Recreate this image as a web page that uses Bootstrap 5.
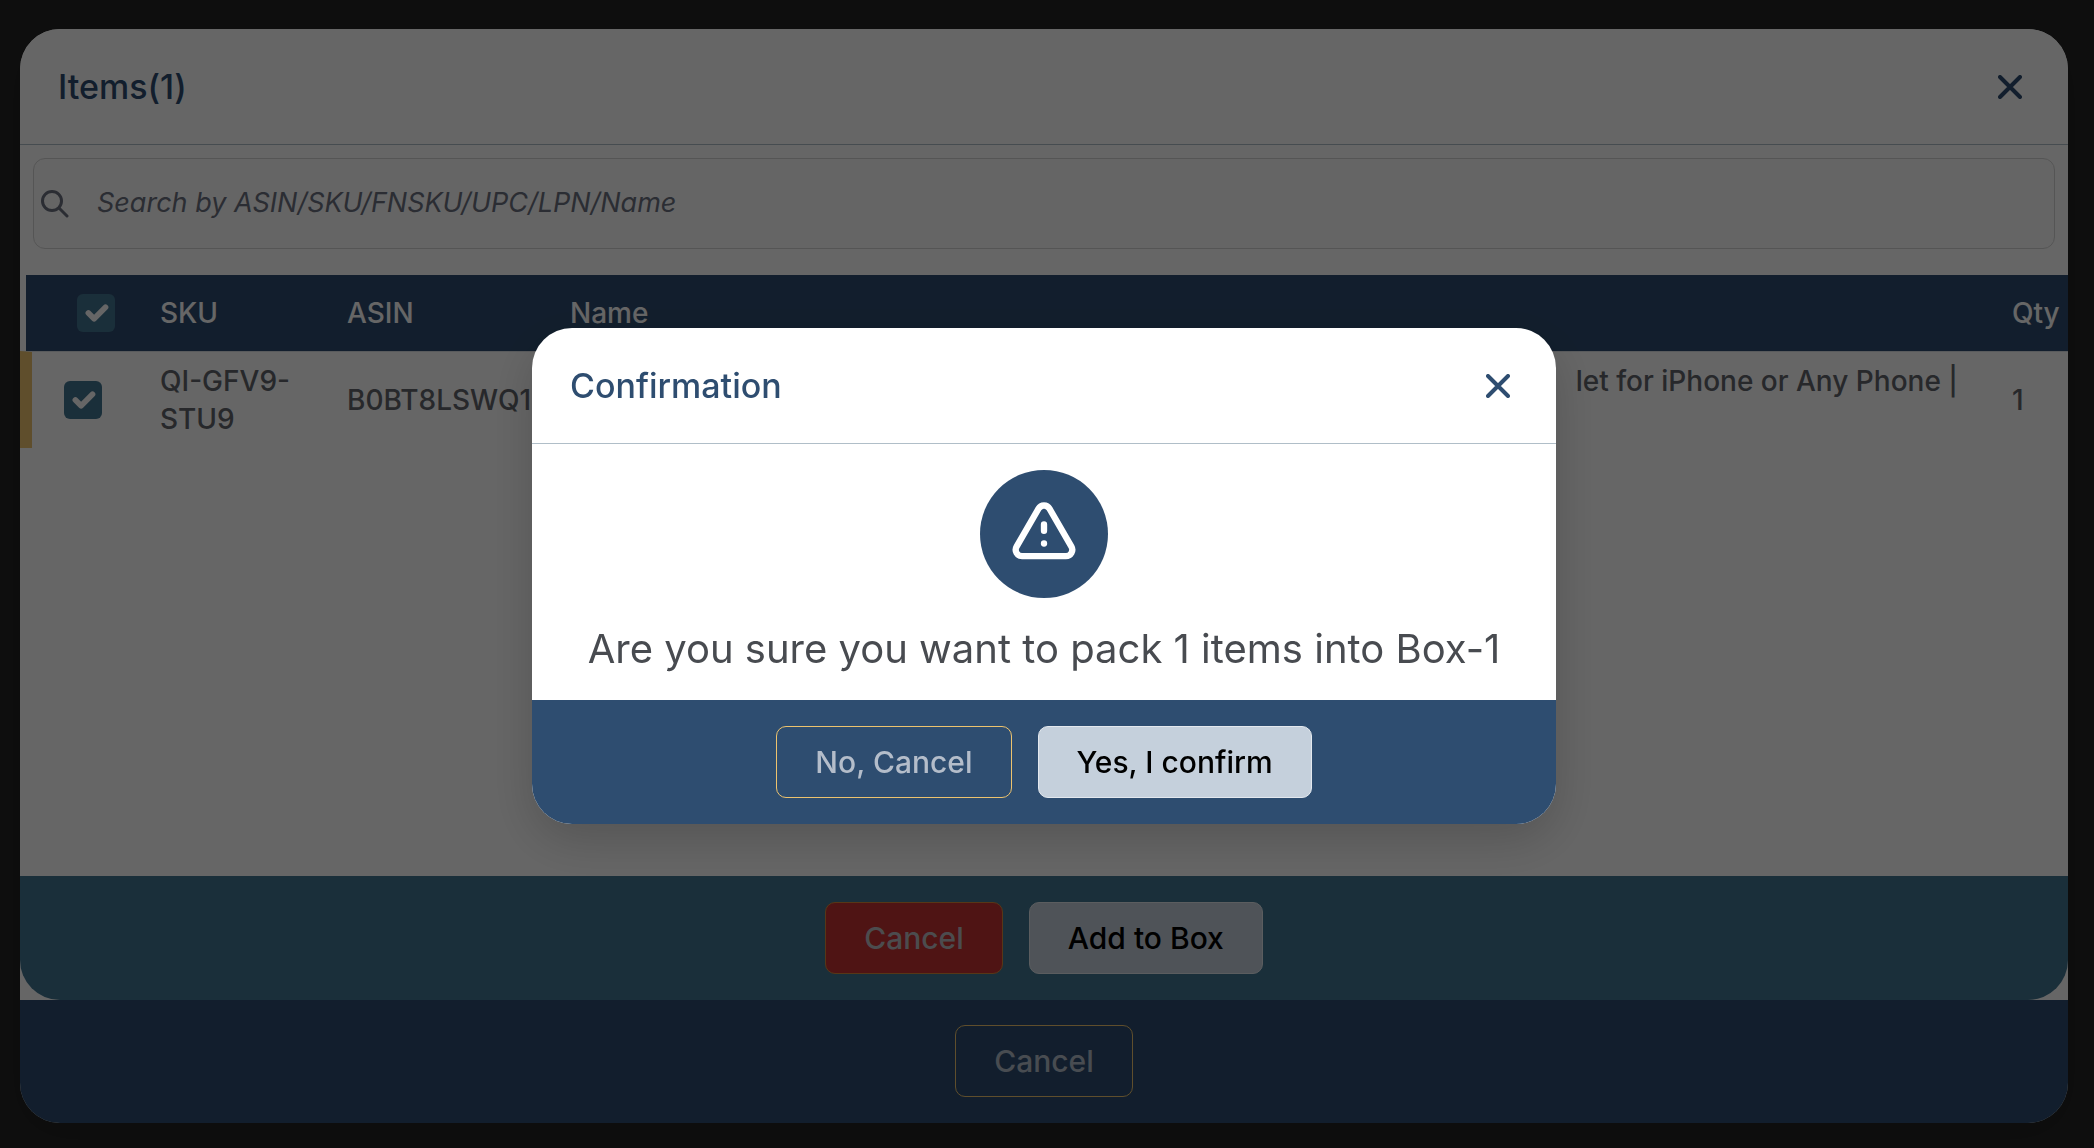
<!DOCTYPE html>
<html lang="en">
<head>
<meta charset="utf-8">
<meta name="viewport" content="width=device-width, initial-scale=1">
<title>Items</title>
<link href="https://cdn.jsdelivr.net/npm/bootstrap@5.3.0/dist/css/bootstrap.min.css" rel="stylesheet">
<style>
  :root { --navy: #2e4d70; --teal: #437691; --gold: #edc36e; }
  body { font-family: Inter, "Open Sans", sans-serif; font-weight: 500; background: #252525; color: #61656b; }
  .page-shell { min-height: 100vh; padding: 29px 26px 25px 20px; }
  .outer-panel, .inner-panel { background: #fff; }
  .outer-panel { border-radius: 40px; overflow: hidden; box-shadow: 0 10px 40px rgba(0,0,0,.15); }
  .inner-panel { border-radius: 0 0 40px 40px; overflow: hidden; }
  .panel-head { height: 116px; padding: 0 38px; border-bottom: 1px solid #b0bec8; color: var(--navy); }
  .panel-head h1, .panel-head h2 { font-size: 34px; line-height: 40px; font-weight: 500; margin: 0; }
  .close-btn { color: var(--navy); width: 40px; height: 40px; padding: 0; border: 0; }
  .search-wrap { padding: 13px 13px 26px; }
  .search-field { height: 91px; border: 1px solid #d4d4d4; border-radius: 12px; background: #fcfcfc; padding: 0 7px; gap: 28px; }
  .search-field label { color: #6b7080; }
  .search-field input { border: 0; padding: 0; background: none; font-size: 27px; font-style: italic; font-weight: 400; }
  .search-field input:focus { background: none; box-shadow: none; }
  .search-field input::placeholder { color: #6b7080; opacity: 1; }
  .item-table { width: 100%; table-layout: fixed; border-collapse: separate; border-spacing: 0; font-size: 28px; line-height: 38px; }
  .item-table th, .item-table td { padding: 10px 0 10px 6px; vertical-align: middle; white-space: nowrap; font-weight: 500; }
  .item-table th { height: 76px; background: var(--navy); color: #fff; }
  .item-table td { border-top: 1px solid #dfe3e8; padding-right: 6px; }
  .item-table .pick-head { border-left: 6px solid #fff; padding-left: 51px; }
  .item-table .pick-cell { border-left: 12px solid var(--gold); padding-left: 32px; }
  .item-table .sku-cell { white-space: normal; }
  .item-table .name-cell { vertical-align: top; text-align: right; padding-right: 48px; }
  .col-pick { width: 134px; } .col-sku { width: 187px; } .col-asin { width: 223px; } .col-qty { width: 62px; }
  .form-check-input.pick-box { display: block; width: 38px; height: 38px; margin: 0; border: 0; border-radius: 6px; }
  .pick-box:checked { background-color: var(--teal); }
  .action-bar { padding: 26px; gap: 26px; }
  .outer-panel > .action-bar { padding-top: 25px; }
  .bar-teal { background: var(--teal); }
  .bar-navy { background: var(--navy); }
  .act { height: 72px; padding: 0 38px; border-radius: 10px; font-size: 30px; font-weight: 500; }
  .act-outline, .act-outline:hover { border-color: var(--gold); color: #b4bdca; }
  .act-danger, .act-danger:hover { background: #c63232; border-color: #d98a3a; color: #bdbdc4; }
  .act-light, .act-light:hover { background: #c5d0dc; border-color: #e3e8ee; color: #000; }
  .shade { position: fixed; inset: 0; background: rgba(0,0,0,.6); padding: 4px 6px 0 0; }
  .confirm { width: 1024px; max-width: 94%; background: #fff; border-radius: 40px; overflow: hidden; box-shadow: 0 16px 48px rgba(0,0,0,.18); }
  .confirm-body { padding: 26px 38px 24px; gap: 24px; }
  .alert-disc { width: 128px; height: 128px; border-radius: 50%; background: var(--navy); }
  .confirm-text { font-size: 40px; line-height: 54px; font-weight: 400; color: #484b50; margin: 0; }
</style>
</head>
<body>
<div class="page-shell d-flex flex-column">
  <main class="outer-panel d-flex flex-column flex-grow-1">
    <section class="inner-panel d-flex flex-column flex-grow-1">
      <header class="panel-head d-flex align-items-center justify-content-between">
        <h1>Items(1)</h1>
        <button type="button" class="btn close-btn" aria-label="Close items">
          <svg width="24" height="24" viewBox="0 0 24 24" fill="none" stroke="currentColor" stroke-width="4" stroke-linecap="round"><path d="M2 2l20 20M22 2L2 22"/></svg>
        </button>
      </header>
      <div class="search-wrap">
        <div class="search-field d-flex align-items-center">
          <label for="search" class="flex-shrink-0">
            <svg class="d-block" width="28" height="28" viewBox="0 0 28 28" fill="none" stroke="currentColor" stroke-width="3" stroke-linecap="round"><circle cx="11" cy="11" r="9.5"/><path d="M18 18l8 8"/></svg>
          </label>
          <input id="search" type="text" class="form-control" placeholder="Search by ASIN/SKU/FNSKU/UPC/LPN/Name" aria-label="Search items">
        </div>
      </div>
      <table class="item-table">
        <colgroup><col class="col-pick"><col class="col-sku"><col class="col-asin"><col><col class="col-qty"></colgroup>
        <thead>
          <tr>
            <th class="pick-head"><input class="form-check-input pick-box" type="checkbox" checked aria-label="Select all items"></th>
            <th>SKU</th><th>ASIN</th><th>Name</th><th>Qty</th>
          </tr>
        </thead>
        <tbody>
          <tr>
            <td class="pick-cell"><input class="form-check-input pick-box" type="checkbox" checked aria-label="Select QI-GFV9-STU9"></td>
            <td class="sku-cell">QI-GFV9-<wbr>STU9</td>
            <td>B0BT8LSWQ1</td>
            <td class="name-cell">let for iPhone or Any Phone |</td>
            <td>1</td>
          </tr>
        </tbody>
      </table>
      <footer class="action-bar bar-teal d-flex justify-content-center mt-auto">
        <button type="button" class="btn act act-danger">Cancel</button>
        <button type="button" class="btn act act-light">Add to Box</button>
      </footer>
    </section>
    <footer class="action-bar bar-navy d-flex justify-content-center">
      <button type="button" class="btn act act-outline">Cancel</button>
    </footer>
  </main>
</div>

<div class="shade d-flex align-items-center justify-content-center">
  <section class="confirm" role="dialog" aria-modal="true" aria-labelledby="confirm-title">
    <header class="panel-head d-flex align-items-center justify-content-between">
      <h2 id="confirm-title">Confirmation</h2>
      <button type="button" class="btn close-btn" aria-label="Close confirmation">
        <svg width="24" height="24" viewBox="0 0 24 24" fill="none" stroke="currentColor" stroke-width="4" stroke-linecap="round"><path d="M2 2l20 20M22 2L2 22"/></svg>
      </button>
    </header>
    <div class="confirm-body d-flex flex-column align-items-center">
      <div class="alert-disc d-flex align-items-center justify-content-center">
        <svg width="76" height="76" viewBox="0 0 24 24" fill="none" stroke="#fff" stroke-width="2" stroke-linecap="round" stroke-linejoin="round"><path d="M12 9v2m0 4h.01m-6.938 4h13.856c1.540 0 2.502-1.667 1.732-3L13.732 4c-.770-1.333-2.694-1.333-3.464 0L3.340 16c-.770 1.333.192 3 1.732 3z"/></svg>
      </div>
      <p class="confirm-text">Are you sure you want to pack 1 items into Box-1</p>
    </div>
    <footer class="action-bar bar-navy d-flex justify-content-center">
      <button type="button" class="btn act act-outline">No, Cancel</button>
      <button type="button" class="btn act act-light">Yes, I confirm</button>
    </footer>
  </section>
</div>
<script src="https://cdn.jsdelivr.net/npm/bootstrap@5.3.0/dist/js/bootstrap.bundle.min.js"></script>
</body>
</html>
